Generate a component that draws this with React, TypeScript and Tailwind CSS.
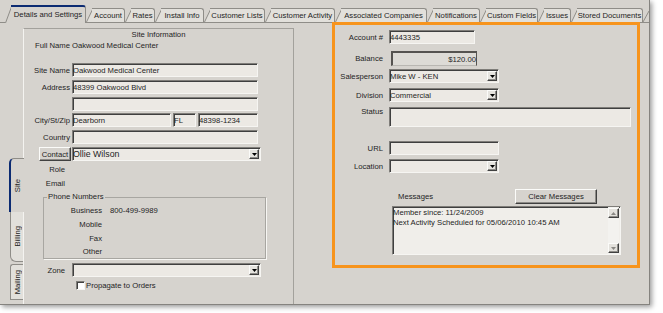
import React from 'react';

// classic 3D borders
const SUNKEN =
  'border border-[#7f7d79] border-r-[#f6f5f2] border-b-[#f6f5f2] shadow-[inset_1px_1px_0_#3f3f3f]';
const RAISED =
  'border border-[#fbfbf9] border-r-[#404040] border-b-[#404040] shadow-[inset_-1px_-1px_0_#8d8b87]';
const LINE = '#8f8d88';

const TABS = [
  { label: 'Details and Settings', w: 'w-[81px]' },
  { label: 'Account', w: 'w-[39px]' },
  { label: 'Rates', w: 'w-[30px]' },
  { label: 'Install Info', w: 'w-[49px]' },
  { label: 'Customer Lists', w: 'w-[61px]' },
  { label: 'Customer Activity', w: 'w-[70px]' },
  { label: 'Associated Companies', w: 'w-[92px]' },
  { label: 'Notifications', w: 'w-[53px]' },
  { label: 'Custom Fields', w: 'w-[58px]' },
  { label: 'Issues', w: 'w-[33px]' },
  { label: 'Stored Documents', w: 'w-[72px]' },
];

function Arrow({ up = false, color = '#000' }: { up?: boolean; color?: string }) {
  return (
    <svg width="5" height="3" viewBox="0 0 5 3" className={up ? 'rotate-180' : ''}>
      <polygon points="0,0 5,0 2.5,3" fill={color} />
    </svg>
  );
}

function Tab({ label, w, active }: { label: string; w: string; active: boolean }) {
  const h = active ? 18 : 14;
  const fill = active ? '#d6d3ce' : '#e2e0db';
  return (
    <div className={`flex shrink-0 ${w} ${active ? 'h-[18px] -mb-px relative z-10' : 'h-[14px]'}`}>
      <svg width="7" height={h} className="shrink-0 -mr-px">
        <polygon points={`0,${h} 7,0.5 7,${h}`} fill={fill} />
        <line x1="0.5" y1={h} x2="7" y2="0.5" stroke={LINE} />
      </svg>
      <div
        className={`flex-1 flex justify-center border-r border-[#8f8d88] rounded-tr-[3px] whitespace-nowrap ${
          active
            ? 'bg-[#d6d3ce] border-t-2 border-t-[#0c2b72] items-start pt-[3px]'
            : 'bg-[#e2e0db] border-t items-center'
        }`}
      >
        {label}
      </div>
    </div>
  );
}

function Input({
  className = '',
  children,
}: {
  className?: string;
  children?: React.ReactNode;
}) {
  return (
    <div className={`${SUNKEN} bg-[#ece9e4] flex items-center shrink-0 whitespace-nowrap ${className}`}>
      {children}
    </div>
  );
}

function Combo({ className = '', value }: { className?: string; value?: string }) {
  return (
    <div className={`${SUNKEN} bg-[#ece9e4] flex items-center shrink-0 pr-[1px] ${className}`}>
      <span className="flex-1 whitespace-nowrap overflow-hidden">{value}</span>
      <div className={`${RAISED} bg-[#e6e4df] w-[10px] h-[10px] flex items-center justify-center`}>
        <Arrow />
      </div>
    </div>
  );
}

function Row({
  label,
  className = '',
  children,
}: {
  label: string;
  className?: string;
  children?: React.ReactNode;
}) {
  return (
    <div className={`flex items-center ${className}`}>
      <span className="w-[46px] shrink-0 text-right whitespace-nowrap">{label}</span>
      <div className="ml-[2px] flex">{children}</div>
    </div>
  );
}

function SideLabel({ label, className = '' }: { label: string; className?: string }) {
  return (
    <div className={`flex items-center ${className}`}>
      <span className="w-[41px] shrink-0 text-right">{label}</span>
    </div>
  );
}

function Phone({ label, value, className = 'h-[14px]' }: { label: string; value?: string; className?: string }) {
  return (
    <div className={`flex items-center ${className}`}>
      <span className="w-[58px] shrink-0 text-right">{label}</span>
      <span className="ml-[8px]">{value}</span>
    </div>
  );
}

function SitePanel() {
  return (
    <div className="w-[294px] shrink-0 flex pt-[5px]">
      {/* vertical tabs */}
      <div className="w-[23px] shrink-0 flex flex-col items-end pt-[130px]">
        <div className="relative z-10 -mr-px w-[15px] h-[54px] bg-[#d6d3ce] border-l-2 border-t border-l-[#0c2b72] border-t-[#8f8d88] rounded-tl-[5px] flex items-center justify-center">
          <span className="[writing-mode:vertical-rl] rotate-180">Site</span>
        </div>
        <div className="w-[13px] h-[50px] bg-[#e2e0db] border-l border-b border-[#8f8d88] rounded-bl-[6px] flex items-center justify-center">
          <span className="[writing-mode:vertical-rl] rotate-180">Billing</span>
        </div>
        <div className="mt-[2px] w-[13px] h-[36px] bg-[#e2e0db] border-l border-t border-b border-[#8f8d88] rounded-tl-[3px] flex items-center justify-center">
          <span className="[writing-mode:vertical-rl] rotate-180">Mailing</span>
        </div>
      </div>

      {/* site information box */}
      <div className="flex-1 border-t border-r border-l border-[#a3a19c] border-l-[#f4f3f0] flex flex-col">
        <div className="h-[11px] flex items-center justify-center">Site Information</div>
        <div className="h-[11px] flex items-center">
          <span className="w-[46px] text-right">Full Name</span>
          <span className="ml-[2px]">Oakwood Medical Center</span>
        </div>
        <Row label="Site Name" className="mt-[12px]">
          <Input className="w-[186px] h-[14px]">Oakwood Medical Center</Input>
        </Row>
        <Row label="Address" className="mt-[3px]">
          <Input className="w-[186px] h-[14px]">48399 Oakwood Blvd</Input>
        </Row>
        <Row label="" className="mt-[3px]">
          <Input className="w-[186px] h-[14px]" />
        </Row>
        <Row label="City/St/Zip" className="mt-[2px]">
          <Input className="w-[99px] h-[14px]">Dearborn</Input>
          <Input className="ml-[2px] w-[23px] h-[14px]">FL</Input>
          <Input className="ml-[2px] w-[60px] h-[14px]">48398-1234</Input>
        </Row>
        <Row label="Country" className="mt-[3px]">
          <Input className="w-[186px] h-[14px]" />
        </Row>
        <div className="mt-[3px] flex items-center">
          <div className={`${RAISED} ml-[15px] w-[32px] h-[14px] bg-[#d6d3ce] flex items-center justify-center`}>
            Contact
          </div>
          <Combo className="ml-[1px] w-[189px] h-[14px] text-[8.8px]" value="Ollie Wilson" />
        </div>
        <SideLabel label="Role" className="mt-[3px] h-[10px]" />
        <SideLabel label="Email" className="mt-[4px] h-[10px]" />

        <fieldset className="mt-[4px] ml-[19px] w-[223px] border border-[#a8a6a1] shadow-[1px_1px_0_#f7f6f3]">
          <legend className="ml-[3px] px-[1px] leading-[10px]">Phone Numbers</legend>
          <div className="pt-[1px] flex flex-col">
            <Phone label="Business" value="800-499-9989" />
            <Phone label="Mobile" />
            <Phone label="Fax" />
            <Phone label="Other" className="h-[13px]" />
          </div>
        </fieldset>

        <div className="mt-[4px] flex items-center">
          <span className="w-[41px] text-right">Zone</span>
          <Combo className="ml-[7px] w-[189px] h-[14px]" />
        </div>
        <div className="mt-[4px] flex items-center">
          <div className="ml-[52px] w-[9px] h-[9px] bg-white border border-[#7f7d79] border-r-[#f6f5f2] border-b-[#f6f5f2] shadow-[inset_1px_1px_0_#404040]" />
          <span className="ml-[1px]">Propagate to Orders</span>
        </div>
      </div>
    </div>
  );
}

function ARow({
  label,
  className = '',
  children,
  gap = 'ml-[6px]',
}: {
  label: string;
  className?: string;
  children?: React.ReactNode;
  gap?: string;
}) {
  return (
    <div className={`flex items-center ${className}`}>
      <span className="w-[48px] shrink-0 text-right whitespace-nowrap">{label}</span>
      <div className={`${gap} flex`}>{children}</div>
    </div>
  );
}

function ScrollButton({ up }: { up?: boolean }) {
  return (
    <div className={`${RAISED} bg-[#e3e1dc] w-[11px] h-[10px] flex items-center justify-center`}>
      <Arrow up={up} color="#8a8884" />
    </div>
  );
}

function AccountPanel() {
  return (
    <div className="flex-1 -mt-px">
      <div className="ml-[38px] w-[308px] h-[246px] border-[3px] border-[#f7941d] flex flex-col">
        <ARow label="Account #" className="mt-[5px]">
          <Input className="w-[86px] h-[14px]">4443335</Input>
        </ARow>
        <ARow label="Balance" className="mt-[7px]" gap="ml-[8px]">
          <div className="w-[86px] h-[15px] border border-[#555350] border-t-2 border-l-2 border-b-[#b9b7b2] bg-[#dddbd6] flex items-center justify-end">
            $120.00
          </div>
        </ARow>
        <ARow label="Salesperson" className="mt-[3px]">
          <Combo className="w-[110px] h-[14px]" value="Mike W - KEN" />
        </ARow>
        <ARow label="Division" className="mt-[5px]">
          <Combo className="w-[110px] h-[14px]" value="Commercial" />
        </ARow>
        <div className="mt-[5px] flex items-start">
          <span className="w-[48px] shrink-0 text-right">Status</span>
          <Input className="ml-[6px] w-[242px] h-[20px]" />
        </div>
        <ARow label="URL" className="mt-[14px]">
          <Input className="w-[110px] h-[14px]" />
        </ARow>
        <ARow label="Location" className="mt-[4px]">
          <Combo className="w-[110px] h-[14px]" />
        </ARow>
        <div className="mt-[16px] h-[15px] flex items-center">
          <span className="ml-[63px]">Messages</span>
          <div className={`${RAISED} ml-auto mr-[40px] w-[82px] h-[15px] bg-[#d6d3ce] flex items-center justify-center`}>
            Clear Messages
          </div>
        </div>
        <div className={`${SUNKEN} mt-[2px] ml-[57px] w-[229px] h-[49px] bg-[#f0eeea] flex`}>
          <div className="flex-1 leading-[10px] pt-[1px]">
            <div>Member since: 11/24/2009</div>
            <div>Next Activity Scheduled for 05/06/2010 10:45 AM</div>
          </div>
          <div className="w-[11px] mr-[1px] flex flex-col justify-between py-[1px] bg-[#f3f2ef]">
            <ScrollButton up />
            <ScrollButton />
          </div>
        </div>
      </div>
    </div>
  );
}

export default function App() {
  return (
    <div className="w-[663px] h-[313px] bg-white text-[7.7px] leading-[9px] text-[#1e1e1e] font-['Liberation_Sans',Arial,sans-serif]">
      <div className="w-[650px] h-[305px] bg-[#d6d3ce] border-r border-b border-[#85837f] shadow-[2px_2px_5px_rgba(0,0,0,0.4)] flex flex-col">
        {/* tab strip */}
        <div className="h-[23px] shrink-0 flex items-end pl-[5px] border-b border-[#8f8d88]">
          {TABS.map((t, i) => (
            <Tab key={t.label} label={t.label} w={t.w} active={i === 0} />
          ))}
          <svg width="6" height="14" className="shrink-0">
            <line x1="0" y1="14" x2="6" y2="3" stroke={LINE} />
          </svg>
        </div>

        <div className="flex-1 flex min-h-0">
          <SitePanel />
          <AccountPanel />
        </div>
      </div>
    </div>
  );
}
